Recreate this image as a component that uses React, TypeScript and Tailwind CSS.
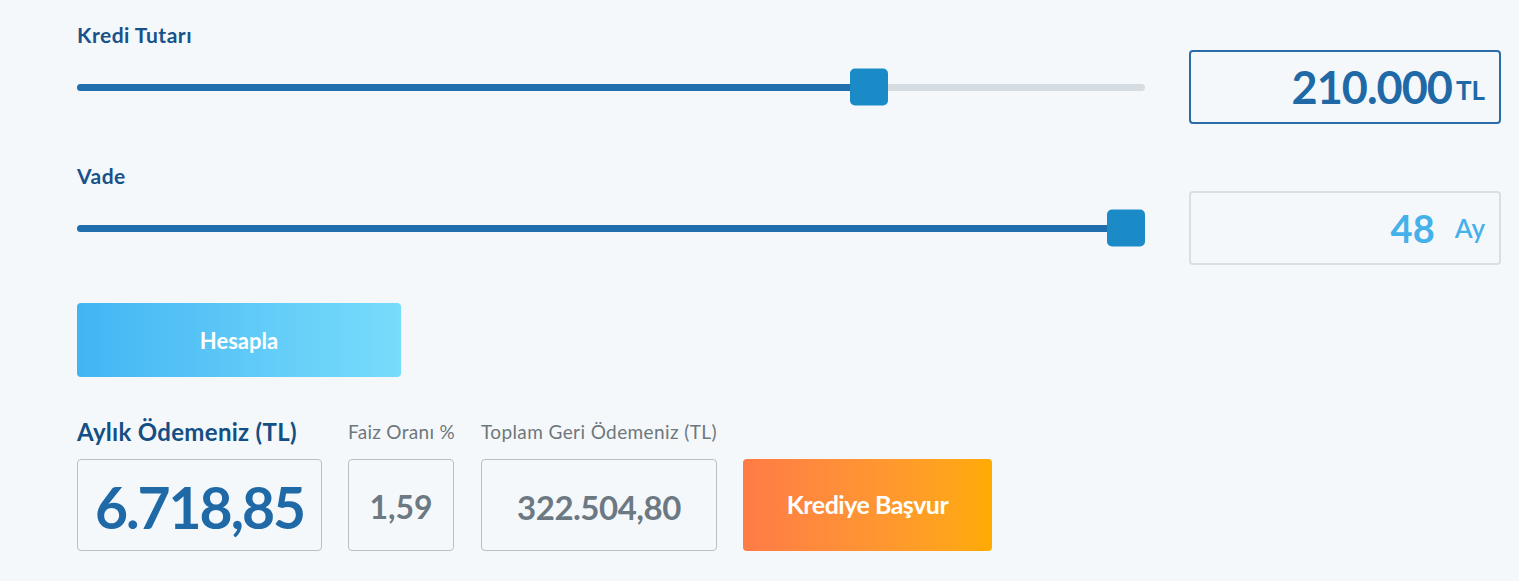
import React from 'react';

const font = { fontFamily: 'Lato, "Noto Sans", sans-serif' };

function Slider({ value }: { value: number }) {
  return (
    <div className="relative flex h-[74px] items-center">
      <div className="h-[7px] w-full rounded-full bg-[#d6dde2]">
        <div className="h-full rounded-l-full bg-[#1f6fae]" style={{ width: `calc(${value}% - ${value * 0.38}px + 19px)` }} />
      </div>
      <div
        className="absolute top-1/2 h-[37px] w-[38px] -translate-y-1/2 rounded-[5px] bg-[#1a8bc7]"
        style={{ left: `calc(${value}% - ${value * 0.38}px)` }}
      />
    </div>
  );
}

function Row({ label, value, children, className }: { label: string; value: number; children: React.ReactNode; className?: string }) {
  return (
    <div className={`flex items-end gap-[44px] ${className ?? ''}`}>
      <div className="flex w-[1068px] flex-col">
        <div className="h-[26px] text-[21px] font-bold leading-[22px] tracking-[0.5px] text-[#18528a]">{label}</div>
        <Slider value={value} />
      </div>
      {children}
    </div>
  );
}

export default function App() {
  return (
    <div className="min-h-[581px] w-full bg-[#f5f8fb] pl-[77px] pt-[24px]" style={font}>
      <Row label="Kredi Tutarı" value={75}>
        <div className="flex h-[74px] w-[312px] items-center justify-end gap-[4px] rounded-[4px] border-2 border-[#2a6ca8] pr-[14px]">
          <span className="text-[45px] font-bold leading-none tracking-[-1px] text-[#1f69a7]">210.000</span>
          <span className="pt-[6px] text-[26px] font-bold leading-none text-[#1f69a7]">TL</span>
        </div>
      </Row>
      <Row label="Vade" value={100} className="mt-[41px]">
        <div className="flex h-[74px] w-[312px] items-center justify-end gap-[20px] rounded-[4px] border-2 border-[#d8dee3] pr-[14px]">
          <span className="text-[38px] font-bold leading-none text-[#44b1ea]">48</span>
          <span className="text-[26px] font-semibold leading-none text-[#44b1ea]">Ay</span>
        </div>
      </Row>
      <button className="mt-[38px] flex h-[74px] w-[324px] items-center justify-center rounded-[4px] bg-gradient-to-r from-[#41b5f3] to-[#78dcfb] text-[22px] font-bold text-white">
        Hesapla
      </button>
      <div className="mt-[40px] flex items-end gap-[26px]">
        <div className="flex flex-col gap-[12px]">
          <div className="text-[24px] font-bold leading-[30px] tracking-[0.3px] text-[#134e84]">Aylık Ödemeniz (TL)</div>
          <div className="flex h-[92px] w-[245px] items-center justify-center rounded-[4px] border border-[#b9bfc3]">
            <span className="pt-[4px] text-[57px] font-bold leading-none tracking-[-2px] text-[#1f69a7]">6.718,85</span>
          </div>
        </div>
        <div className="flex flex-col gap-[12px]">
          <div className="text-[19px] leading-[30px] tracking-[0.3px] text-[#6e777c]">Faiz Oranı %</div>
          <div className="flex h-[92px] w-[106px] items-center justify-center rounded-[4px] border border-[#b9bfc3]">
            <span className="pt-[4px] text-[32px] font-bold leading-none text-[#6c7983]">1,59</span>
          </div>
        </div>
        <div className="flex flex-col gap-[12px]">
          <div className="text-[19px] leading-[30px] tracking-[0.4px] text-[#6e777c]">Toplam Geri Ödemeniz (TL)</div>
          <div className="flex h-[92px] w-[236px] items-center justify-center rounded-[4px] border border-[#b9bfc3]">
            <span className="pt-[4px] text-[33px] font-bold leading-none tracking-[-0.5px] text-[#6c7983]">322.504,80</span>
          </div>
        </div>
        <button className="flex h-[92px] w-[249px] items-center justify-center rounded-[4px] bg-gradient-to-r from-[#ff7b46] to-[#ffab00] text-[25px] font-bold tracking-[-0.5px] text-white">
          Krediye Başvur
        </button>
      </div>
    </div>
  );
}
